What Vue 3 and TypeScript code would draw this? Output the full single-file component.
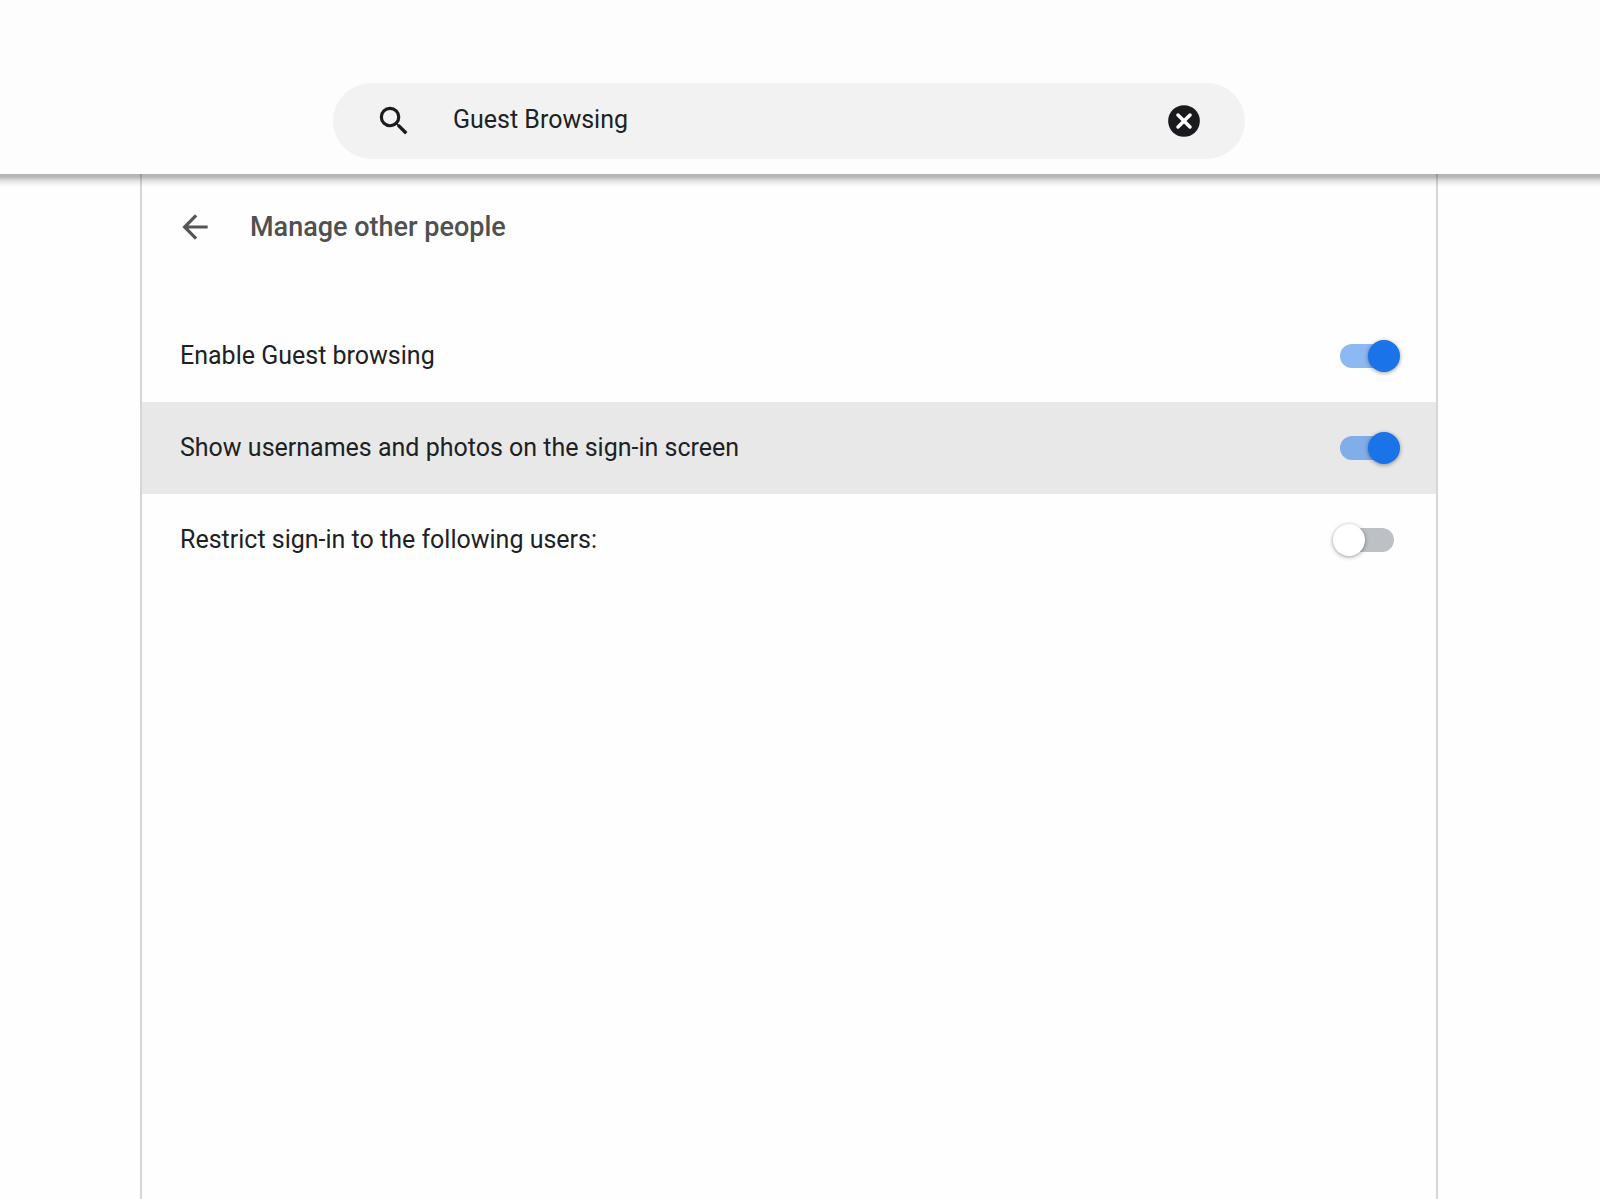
<script setup lang="ts">
import { ref } from 'vue'

interface Setting {
  id: string
  label: string
  enabled: boolean
  highlighted: boolean
}

const query = ref('Guest Browsing')

const settings = ref<Setting[]>([
  { id: 'guest', label: 'Enable Guest browsing', enabled: true, highlighted: false },
  { id: 'usernames', label: 'Show usernames and photos on the sign-in screen', enabled: true, highlighted: true },
  { id: 'restrict', label: 'Restrict sign-in to the following users:', enabled: false, highlighted: false },
])
</script>

<template>
  <div class="page">
    <header class="toolbar">
      <form class="search" role="search" @submit.prevent>
        <svg class="icon" viewBox="0 0 24 24" aria-hidden="true">
          <path d="M15.5 14h-.79l-.28-.27A6.47 6.47 0 0 0 16 9.5 6.5 6.5 0 1 0 9.5 16c1.61 0 3.09-.59 4.23-1.57l.27.28v.79l5 4.99L20.49 19l-4.99-5zm-6 0a4.5 4.5 0 1 1 0-9 4.5 4.5 0 0 1 0 9z" />
        </svg>
        <input v-model="query" class="search-input" type="text" aria-label="Search settings" />
        <button class="icon-button" type="button" aria-label="Clear search" @click="query = ''">
          <svg class="icon" viewBox="0 0 24 24" aria-hidden="true">
            <circle cx="12" cy="12" r="10" />
            <path class="cross" d="M8.2 8.2l7.6 7.6M15.8 8.2l-7.6 7.6" />
          </svg>
        </button>
      </form>
    </header>

    <main class="content">
      <section class="panel">
        <div class="heading">
          <button class="icon-button" type="button" aria-label="Back">
            <svg class="icon back" viewBox="0 0 24 24" aria-hidden="true">
              <path d="M20 11H7.83l5.59-5.59L12 4l-8 8 8 8 1.41-1.41L7.83 13H20v-2z" />
            </svg>
          </button>
          <h1 class="title">Manage other people</h1>
        </div>

        <div
          v-for="item in settings"
          :key="item.id"
          class="row"
          :class="{ highlighted: item.highlighted }"
        >
          <label class="label" :for="item.id">{{ item.label }}</label>
          <input :id="item.id" v-model="item.enabled" class="toggle" type="checkbox" role="switch" />
        </div>
      </section>
    </main>
  </div>
</template>

<style>
body {
  margin: 0;
  background: #fefefe;
}
</style>

<style scoped>
.page {
  display: flex;
  flex-direction: column;
  min-height: 100vh;
  background: #fefefe;
  color: #202124;
  font-family: Roboto, "Liberation Sans", sans-serif;
  font-size: 25px;
  line-height: 32px;
}

.toolbar {
  position: relative;
  display: flex;
  justify-content: center;
  padding: 83px 22px 15px 0;
  background: #fdfdfd;
}

.toolbar::after {
  content: "";
  position: absolute;
  top: 100%;
  right: 0;
  left: 0;
  height: 13px;
  background: linear-gradient(rgba(0, 0, 0, 0.3), rgba(0, 0, 0, 0.27) 3px, rgba(0, 0, 0, 0.1) 7px, transparent);
}

.search {
  display: flex;
  align-items: center;
  box-sizing: border-box;
  width: 100%;
  max-width: 912px;
  height: 76px;
  padding: 0 42px;
  border-radius: 38px;
  background: #f2f2f2;
}

.search-input {
  flex: 1;
  min-width: 0;
  height: 32px;
  margin: 0 40px;
  padding: 0 0 2px;
  border: 0;
  outline: 0;
  background: transparent;
  color: inherit;
  font: inherit;
}

.icon {
  display: block;
  flex: none;
  width: 38px;
  height: 38px;
  fill: #1b1b1f;
}

.cross {
  fill: none;
  stroke: #fff;
  stroke-width: 2.2;
  stroke-linecap: round;
}

.back {
  fill: #555;
}

.icon-button {
  padding: 0;
  border: 0;
  background: transparent;
  cursor: pointer;
}

.content {
  display: flex;
  flex: 1;
  justify-content: center;
  padding-right: 22px;
}

.panel {
  box-sizing: border-box;
  width: 100%;
  max-width: 1298px;
  border: solid #d6d6d6;
  border-width: 0 2px;
}

.heading {
  display: flex;
  align-items: center;
  gap: 36px;
  height: 106px;
  margin-bottom: 30px;
  padding: 0 34px;
}

.title {
  margin: 0;
  color: #505050;
  font-size: 27px;
  font-weight: 500;
}

.row {
  display: flex;
  align-items: center;
  justify-content: space-between;
  height: 92px;
  padding: 0 42px 0 38px;
}

.highlighted {
  background: #e8e8e8;
}

.toggle {
  position: relative;
  width: 54px;
  height: 24px;
  margin: 0;
  border-radius: 12px;
  background: #bdc1c6;
  appearance: none;
  cursor: pointer;
}

.toggle::before {
  content: "";
  position: absolute;
  top: -4px;
  left: -7px;
  width: 32px;
  height: 32px;
  border-radius: 50%;
  background: #fff;
  box-shadow: 0 1px 4px rgba(0, 0, 0, 0.4);
}

.toggle:checked {
  background: rgba(26, 115, 232, 0.5);
}

.toggle:checked::before {
  left: 28px;
  background: #1a73e8;
}
</style>
